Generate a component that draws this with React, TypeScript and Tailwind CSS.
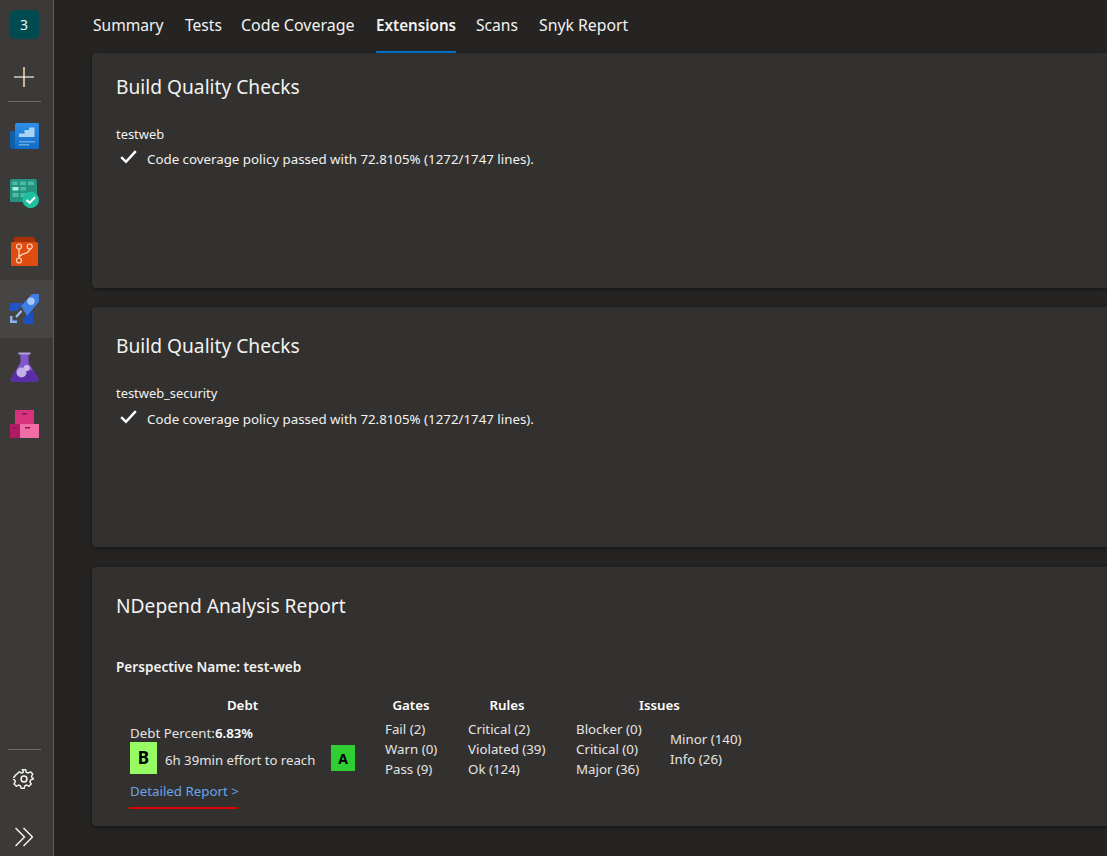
import React from "react";

const font = "font-['Noto_Sans','Open_Sans',sans-serif]";

function Card({ className, title, children }: { className: string; title: string; children: React.ReactNode }) {
  return (
    <section className={`rounded-l-[4px] bg-[#323130] pl-6 shadow-[0_1px_4px_rgba(0,0,0,0.45)] ${className}`}>
      <h2 className="text-[19.2px] leading-[26px] font-normal text-[#f3f2f1]">{title}</h2>
      {children}
    </section>
  );
}

function Check() {
  return (
    <svg width="17" height="14" viewBox="0 0 17 14" className="mb-[4px] shrink-0">
      <path d="M1.200 7.200 L6 11.800 L15.800 1.200" fill="none" stroke="#fff" strokeWidth="2.500" />
    </svg>
  );
}

function Quality({ name, gap }: { name: string; gap: string }) {
  return (
    <div className="mt-[25px]">
      <div className="text-[12.9px] leading-[18px] text-[#f3f2f1]">{name}</div>
      <div className={`flex items-center pl-[4px] text-[13.3px] leading-[18px] text-[#f3f2f1] ${gap}`}>
        <Check />
        <span className="ml-[10px]">Code coverage policy passed with 72.8105% (1272/1747 lines).</span>
      </div>
    </div>
  );
}

function NavIcon({ children, active, cls }: { children: React.ReactNode; active?: boolean; cls?: string }) {
  return (
    <div className={`flex h-[58px] w-[53px] shrink-0 items-center justify-center pr-[5px] ${active ? "bg-[#464544]" : ""} ${cls ?? ""}`}>
      {children}
    </div>
  );
}

function Col({ items, cls }: { items: string[]; cls: string }) {
  return (
    <div className={cls}>
      {items.map((t) => (
        <div key={t} className="h-5 leading-5 whitespace-nowrap">{t}</div>
      ))}
    </div>
  );
}

export default function App() {
  return (
    <div className={`flex h-[856px] w-[1107px] overflow-hidden bg-[#252423] ${font}`}>
      <aside className="flex h-full w-[54px] shrink-0 flex-col items-center border-r border-[#5c5b59] bg-[#3b3a39]">
        <div className="flex w-full flex-col items-center pr-[5px]">
          <div className="mt-[10px] flex h-[29px] w-[29px] items-center justify-center rounded-[5px] bg-[#004b50] text-[14px] text-[#e8f4f4]">3</div>
          <svg width="20" height="20" viewBox="0 0 20 20" className="mt-[28px]">
            <path d="M10 0V20" stroke="#f3cfa5" strokeWidth="1.600" />
            <path d="M0 10H20" stroke="#f3f2f1" strokeWidth="1.200" />
          </svg>
          <div className="mt-[14px] h-px w-[33px] bg-[#6b6a68]" />
        </div>
        <NavIcon cls="mt-[4px] pt-[2px]">
          <svg width="29" height="26" viewBox="0 0 29 26">
            <defs>
              <linearGradient id="blueBoard" x1="0" y1="0" x2="0" y2="1">
                <stop offset="0" stopColor="#2f8fe6" />
                <stop offset="1" stopColor="#0f6cc8" />
              </linearGradient>
            </defs>
            <path d="M0 9a1 1 0 0 1 1-1h5v18H2a2 2 0 0 1-2-2z" fill="#0f5ea8" />
            <rect x="5" y="0" width="24" height="26" rx="1.500" fill="url(#blueBoard)" />
            <path d="M9 14v-3.500h5.500V7H19V4.500h5.500V14z" fill="#a9d3f5" />
            <path d="M9 18h16v1.500H9zM9 21h10v1.500H9z" fill="#62a8e5" />
          </svg>
        </NavIcon>
        <NavIcon cls="pt-[2px]">
          <svg width="29" height="30" viewBox="0 0 29 30">
            <rect x="0" y="0" width="27" height="23" rx="1.500" fill="#23937f" />
            <path d="M2.500 2.500h5v3.500h-5zM10 2.500h6v3.500h-6zM18 2.500h6v3.500h-6z" fill="#4dbba6" />
            <path d="M2.500 8h6v3.500h-6z" fill="#a8f0e0" />
            <path d="M10.500 8h5.500v3.500h-5.500zM2.500 14h6v4h-6zM10.500 14h5.500v4h-5.500z" fill="#4dbba6" />
            <circle cx="20.700" cy="21" r="8.300" fill="#1fc0a0" />
            <path d="M16.500 21l3.200 2.900 5.300-5.700" fill="none" stroke="#fff" strokeWidth="2.100" />
          </svg>
        </NavIcon>
        <NavIcon>
          <svg width="27" height="29" viewBox="0 0 27 29">
            <path d="M3 0h20l1.500 5h-22z" fill="#a83208" />
            <rect x="0" y="5" width="27" height="24" rx="1.500" fill="#de4c0f" />
            <path d="M8 12V21M18.700 12c0 6-10.200 3-10.700 9" fill="none" stroke="#fbd9c6" strokeWidth="1.300" />
            <circle cx="8" cy="9.500" r="2.500" fill="#de4c0f" stroke="#fbd9c6" strokeWidth="1.200" />
            <circle cx="18.700" cy="9.500" r="2.500" fill="#de4c0f" stroke="#fbd9c6" strokeWidth="1.200" />
            <circle cx="8" cy="23.500" r="2.500" fill="#de4c0f" stroke="#fbd9c6" strokeWidth="1.200" />
          </svg>
        </NavIcon>
        <NavIcon active>
          <svg width="29" height="30" viewBox="0 0 29 30">
            <path d="M0 9h13l-6 8H0z" fill="#1f55c4" />
            <path d="M13 24l10-7v13H13z" fill="#1d4fbd" />
            <path d="M11 12L21 1a3 3 0 0 1 2-1h6v7a3 3 0 0 1-1 2L17 22z" fill="#3f7fe4" />
            <circle cx="21" cy="7.300" r="3.700" fill="#a8c8f5" />
            <path d="M0 22v7h7v-2.500H2.500V22z" fill="#8db4f2" />
            <path d="M6 23l5.500-6" stroke="#a8c8f5" strokeWidth="2" />
          </svg>
        </NavIcon>
        <NavIcon>
          <svg width="29" height="30" viewBox="0 0 29 30">
            <path d="M10.500 2h8v8.500L28 26.500A2.300 2.300 0 0 1 26 30H3a2.300 2.300 0 0 1-2-3.500l9.500-16z" fill="#8256cc" />
            <path d="M5.500 18.500h18L28 26.500A2.300 2.300 0 0 1 26 30H3a2.300 2.300 0 0 1-2-3.500z" fill="#5a2da8" />
            <path d="M8.500 0.500h12v2h-12z" fill="#b4a0d8" />
            <circle cx="11.500" cy="20.500" r="5" fill="#c0aee6" />
            <circle cx="16.700" cy="16" r="3" fill="#cbbcec" />
          </svg>
        </NavIcon>
        <NavIcon cls="pb-[2px]">
          <svg width="29" height="28" viewBox="0 0 29 28">
            <rect x="5" y="0" width="19" height="14" fill="#d6337c" />
            <rect x="0" y="14" width="10" height="14" fill="#b21b63" />
            <rect x="10" y="14" width="19" height="14" fill="#f06da6" />
            <path d="M12 3h5v1.500h-5zM3 17h4v1.500H3zM15 17h5v1.500h-5z" fill="#8a1550" />
          </svg>
        </NavIcon>
        <div className="mt-auto flex w-full flex-col items-center pr-[5px]">
          <div className="h-px w-[33px] bg-[#6b6a68]" />
          <svg width="22" height="22" viewBox="0 0 24 24" className="mt-[18px]" fill="none" stroke="#f3f2f1" strokeWidth="1.700" strokeLinejoin="round">
            <path d="M10 2h4l.7 3 2.300 1 2.600-1.600 2.800 2.800L20.800 9.800l1 2.200 1.200.7v-.7 1.200l-3 .8-1 2.300 1.600 2.600-2.800 2.800-2.600-1.600-2.200 1-.8 2.900h-3.600l-.8-2.900-2.200-1-2.600 1.600-2.800-2.800 1.600-2.600-1-2.300-3-.8v-1.900l3-.7 1-2.300L3.600 7.200l2.800-2.800L9 6l2.300-1z" transform="translate(12 12) scale(.92) translate(-12 -13)" />
            <circle cx="12" cy="12" r="3.200" />
          </svg>
          <svg width="18" height="20" viewBox="0 0 18 20" className="mb-[9px] mt-[37px]" fill="none" stroke="#f3f2f1" strokeWidth="1.500">
            <path d="M0.500 1l9 9-9 9M8.500 1l9 9-9 9" />
          </svg>
        </div>
      </aside>

      <main className="flex min-w-0 flex-1 flex-col pl-[38px] text-[#f3f2f1]">
        <nav className="flex h-[53px] shrink-0 gap-[21px] pl-px whitespace-nowrap text-[15.6px]">
          <div className="w-[71px] pt-[13px] leading-[24px]">Summary</div>
          <div className="w-[35px] pt-[13px] leading-[24px]">Tests</div>
          <div className="w-[114px] pt-[13px] text-[16px] leading-[24px]">Code Coverage</div>
          <div className="w-[80px] border-b-2 border-[#0078d4] pt-[13px] text-[15.2px] leading-[24px] font-semibold">Extensions</div>
          <div className="-ml-px w-[42px] pt-[13px] leading-[24px]">Scans</div>
          <div className="pt-[13px] text-[15.8px] leading-[24px]">Snyk Report</div>
        </nav>

        <Card className="h-[235px] pt-[21px]" title="Build Quality Checks">
          <Quality name="testweb" gap="mt-[7px]" />
        </Card>
        <Card className="mt-[19px] h-[240px] pt-[26px]" title="Build Quality Checks">
          <Quality name="testweb_security" gap="mt-[8px]" />
        </Card>
        <Card className="mt-[20px] h-[259px] pt-[26px]" title="NDepend Analysis Report">
          <div className="mt-[39px] text-[13.6px] leading-[18px] font-semibold">Perspective Name: test-web</div>
          <div className="mt-[20px] flex text-[13.3px] text-[#e6e4e2]">
            <div className="ml-[14px] w-[255px] shrink-0">
              <div className="w-[225px] text-center font-semibold leading-[18px] text-white">Debt</div>
              <div className="mt-[10px] leading-[18px]">Debt Percent:<span className="font-semibold text-white">6.83%</span></div>
              <div className="flex w-[225px] items-center">
                <div className="flex h-[32px] w-[27px] items-center justify-center bg-[#98fb64] text-[17px] font-bold text-black">B</div>
                <span className="ml-[8px] flex-1 whitespace-nowrap pt-[6px] text-[13.2px]">6h 39min effort to reach</span>
                <div className="flex h-[26px] w-[24px] items-center justify-center bg-[#2fce33] text-[14px] font-bold text-black">A</div>
              </div>
              <div className="mt-[8px] leading-[18px] text-[#6ba5e7]">Detailed Report &gt;</div>
              <div className="-ml-px mt-[7px] h-[2px] w-[108px] bg-[#e00000]" />
            </div>
            <div className="flex flex-col">
              <div className="flex font-semibold leading-[18px] text-white">
                <div className="w-[83px]"><div className="w-[52px] text-center">Gates</div></div>
                <div className="w-[108px]"><div className="w-[78px] text-center">Rules</div></div>
                <div className="w-[167px] text-center">Issues</div>
              </div>
              <div className="mt-[5px] flex">
                <Col items={["Fail (2)", "Warn (0)", "Pass (9)"]} cls="w-[83px]" />
                <Col items={["Critical (2)", "Violated (39)", "Ok (124)"]} cls="w-[108px]" />
                <Col items={["Blocker (0)", "Critical (0)", "Major (36)"]} cls="w-[94px]" />
                <Col items={["Minor (140)", "Info (26)"]} cls="mt-[10px] w-[90px]" />
              </div>
            </div>
          </div>
        </Card>
      </main>
    </div>
  );
}
